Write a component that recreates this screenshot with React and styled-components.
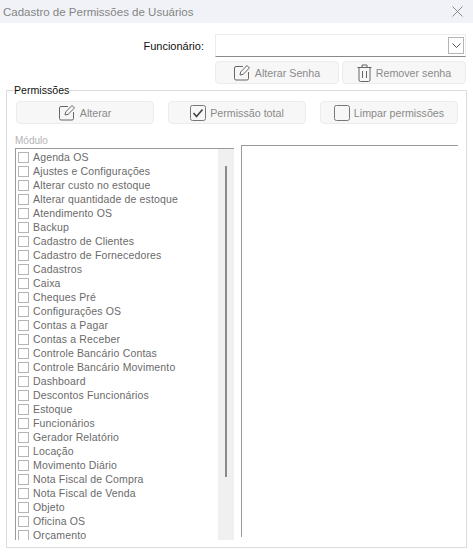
import React from 'react'
import styled, { createGlobalStyle } from 'styled-components'

const modules = [
  'Agenda OS', 'Ajustes e Configurações', 'Alterar custo no estoque', 'Alterar quantidade de estoque',
  'Atendimento OS', 'Backup', 'Cadastro de Clientes', 'Cadastro de Fornecedores', 'Cadastros', 'Caixa',
  'Cheques Pré', 'Configurações OS', 'Contas a Pagar', 'Contas a Receber', 'Controle Bancário Contas',
  'Controle Bancário Movimento', 'Dashboard', 'Descontos Funcionários', 'Estoque', 'Funcionários',
  'Gerador Relatório', 'Locação', 'Movimento Diário', 'Nota Fiscal de Compra', 'Nota Fiscal de Venda',
  'Objeto', 'Oficina OS', 'Orçamento',
]

const EditIcon = ({ size = 17 }) => (
  <svg width={size} height={size} viewBox="0 0 17 17" fill="none" stroke="#666" strokeWidth="1">
    <path d="M9 2.500H2a1.500 1.500 0 0 0-1.500 1.500v10.500A1.500 1.500 0 0 0 2 16h11a1.500 1.500 0 0 0 1.500-1.500V8" />
    <path d="M6 11l.6-3L13 1.500l2.500 2.500L9 10.400z" />
  </svg>
)

const TrashIcon = () => (
  <svg width="15" height="18" viewBox="0 0 15 18" fill="none" stroke="#666" strokeWidth="1">
    <path d="M.5 3.500h14M5 3.500V1h5v2.500M2 3.500V16a1.500 1.500 0 0 0 1.500 1.500h8A1.500 1.500 0 0 0 13 16V3.500M5.500 7v7M9.500 7v7" />
  </svg>
)

const CheckIcon = ({ checked }) => (
  <svg width="16" height="16" viewBox="0 0 16 16" fill="none">
    <rect x=".5" y=".5" width="15" height="15" rx="2" stroke="#777" />
    {checked && <path d="M3.500 8l3 3.500 6-7" stroke="#444" strokeWidth="1.600" />}
  </svg>
)

const ChevronIcon = () => (
  <svg width="9" height="5" viewBox="0 0 9 5" fill="none" stroke="#555">
    <path d="M.5.500l4 4 4-4" />
  </svg>
)

const CloseIcon = () => (
  <svg width="11" height="11" viewBox="0 0 11 11" fill="none" stroke="#8a8a8a">
    <path d="M.5.500l10 10M10.500.500l-10 10" />
  </svg>
)

const App = () => {
  return (
    <Window>
      <GlobalStyle />
      <TitleBar>
        <Title>Cadastro de Permissões de Usuários</Title>
        <CloseIcon />
      </TitleBar>
      <EmployeeRow>
        <EmployeeLabel>Funcionário:</EmployeeLabel>
        <EmployeeField>
          <Combo>
            <ComboButton><ChevronIcon /></ComboButton>
          </Combo>
          <PasswordActions>
            <ActionButton><EditIcon /> Alterar Senha</ActionButton>
            <ActionButton><TrashIcon /> Remover senha</ActionButton>
          </PasswordActions>
        </EmployeeField>
      </EmployeeRow>
      <Group>
        <GroupLegend>Permissões</GroupLegend>
        <Toolbar>
          <ActionButton><EditIcon /> Alterar</ActionButton>
          <ActionButton><CheckIcon checked /> Permissão total</ActionButton>
          <ActionButton><CheckIcon /> Limpar permissões</ActionButton>
        </Toolbar>
        <ColumnCaption>Módulo</ColumnCaption>
        <Columns>
          <ModuleList>
            <Rows>
              {modules.map((name) => (
                <Row key={name}>
                  <Box />
                  {name}
                </Row>
              ))}
            </Rows>
            <ScrollTrack>
              <ScrollThumb />
            </ScrollTrack>
          </ModuleList>
          <DetailPanel />
        </Columns>
      </Group>
    </Window>
  )
}

const GlobalStyle = createGlobalStyle`
  html, body {
    margin: 0;
    background: #fff;
  }
  * {
    box-sizing: border-box;
  }
`

const Window = styled.div`
  width: 473px;
  height: 556px;
  overflow: hidden;
  background: #fff;
  font-family: "Liberation Sans", Arial, sans-serif;
  font-size: 11px;
`

const TitleBar = styled.div`
  height: 23px;
  padding: 0 10px 0 3px;
  display: flex;
  align-items: center;
  justify-content: space-between;
  background: #f0f2f7;
`

const Title = styled.span`
  font-size: 11.5px;
  color: #858585;
`

const EmployeeRow = styled.div`
  margin-top: 11px;
  padding-right: 7px;
  display: flex;
  justify-content: flex-end;
  gap: 11px;
`

const EmployeeLabel = styled.label`
  margin-top: 6px;
  color: #111;
`

const EmployeeField = styled.div`
  width: 251px;
  display: flex;
  flex-direction: column;
  gap: 4px;
`

const Combo = styled.div`
  height: 23px;
  padding: 2px 1px 2px 0;
  display: flex;
  justify-content: flex-end;
  border: 1px solid #ececec;
  border-bottom: 1px solid #8a8a8a;
`

const ComboButton = styled.div`
  width: 16px;
  display: flex;
  align-items: center;
  justify-content: center;
  border: 1px solid #b4b4b4;
`

const PasswordActions = styled.div`
  display: grid;
  grid-template-columns: 124px 124px;
  gap: 3px;
`

const ActionButton = styled.div`
  height: 23px;
  display: flex;
  align-items: center;
  justify-content: center;
  gap: 4px;
  background: #f7f7f7;
  border: 1px solid #ececec;
  border-radius: 4px;
  font-size: 10.7px;
  color: #8a8a8a;
`

const Group = styled.fieldset`
  margin: 0 7px 0 6px;
  padding: 0 8px 0 8px;
  height: 464px;
  border: 1px solid #dcdcdc;
`

const GroupLegend = styled.legend`
  margin-left: -1px;
  padding: 0;
  font-size: 10.6px;
  line-height: 12px;
  color: #111;
`

const Toolbar = styled.div`
  margin: 5px 0 0 1px;
  display: grid;
  grid-template-columns: repeat(3, 138px);
  gap: 14px;
`

const ColumnCaption = styled.div`
  margin: 11px 0 0 0;
  font-size: 10px;
  line-height: 12px;
  color: #b4b4b4;
`

const Columns = styled.div`
  display: flex;
  gap: 7px;
  align-items: flex-start;
  margin-top: 1px;
`

const ModuleList = styled.div`
  width: 219px;
  height: 392px;
  display: flex;
  overflow: hidden;
  border-top: 1px solid #9a9a9a;
  border-left: 1px solid #9a9a9a;
`

const Rows = styled.div`
  flex: 1;
  padding: 1px 0 0 2px;
`

const Row = styled.div`
  height: 14px;
  display: flex;
  align-items: center;
  gap: 4px;
  font-size: 10.5px;
  letter-spacing: 0.15px;
  color: #6a6a6a;
`

const Box = styled.span`
  width: 11px;
  height: 11px;
  border: 1px solid #b4b4b4;
`

const ScrollTrack = styled.div`
  width: 16px;
  padding-top: 17px;
  display: flex;
  justify-content: center;
  background: #f0f0f0;
`

const ScrollThumb = styled.div`
  width: 2px;
  height: 311px;
  background: #8a8a8a;
`

const DetailPanel = styled.div`
  width: 217px;
  height: 392px;
  margin-top: -3px;
  border-top: 1px solid #9a9a9a;
  border-left: 1px solid #9a9a9a;
`

export default App
